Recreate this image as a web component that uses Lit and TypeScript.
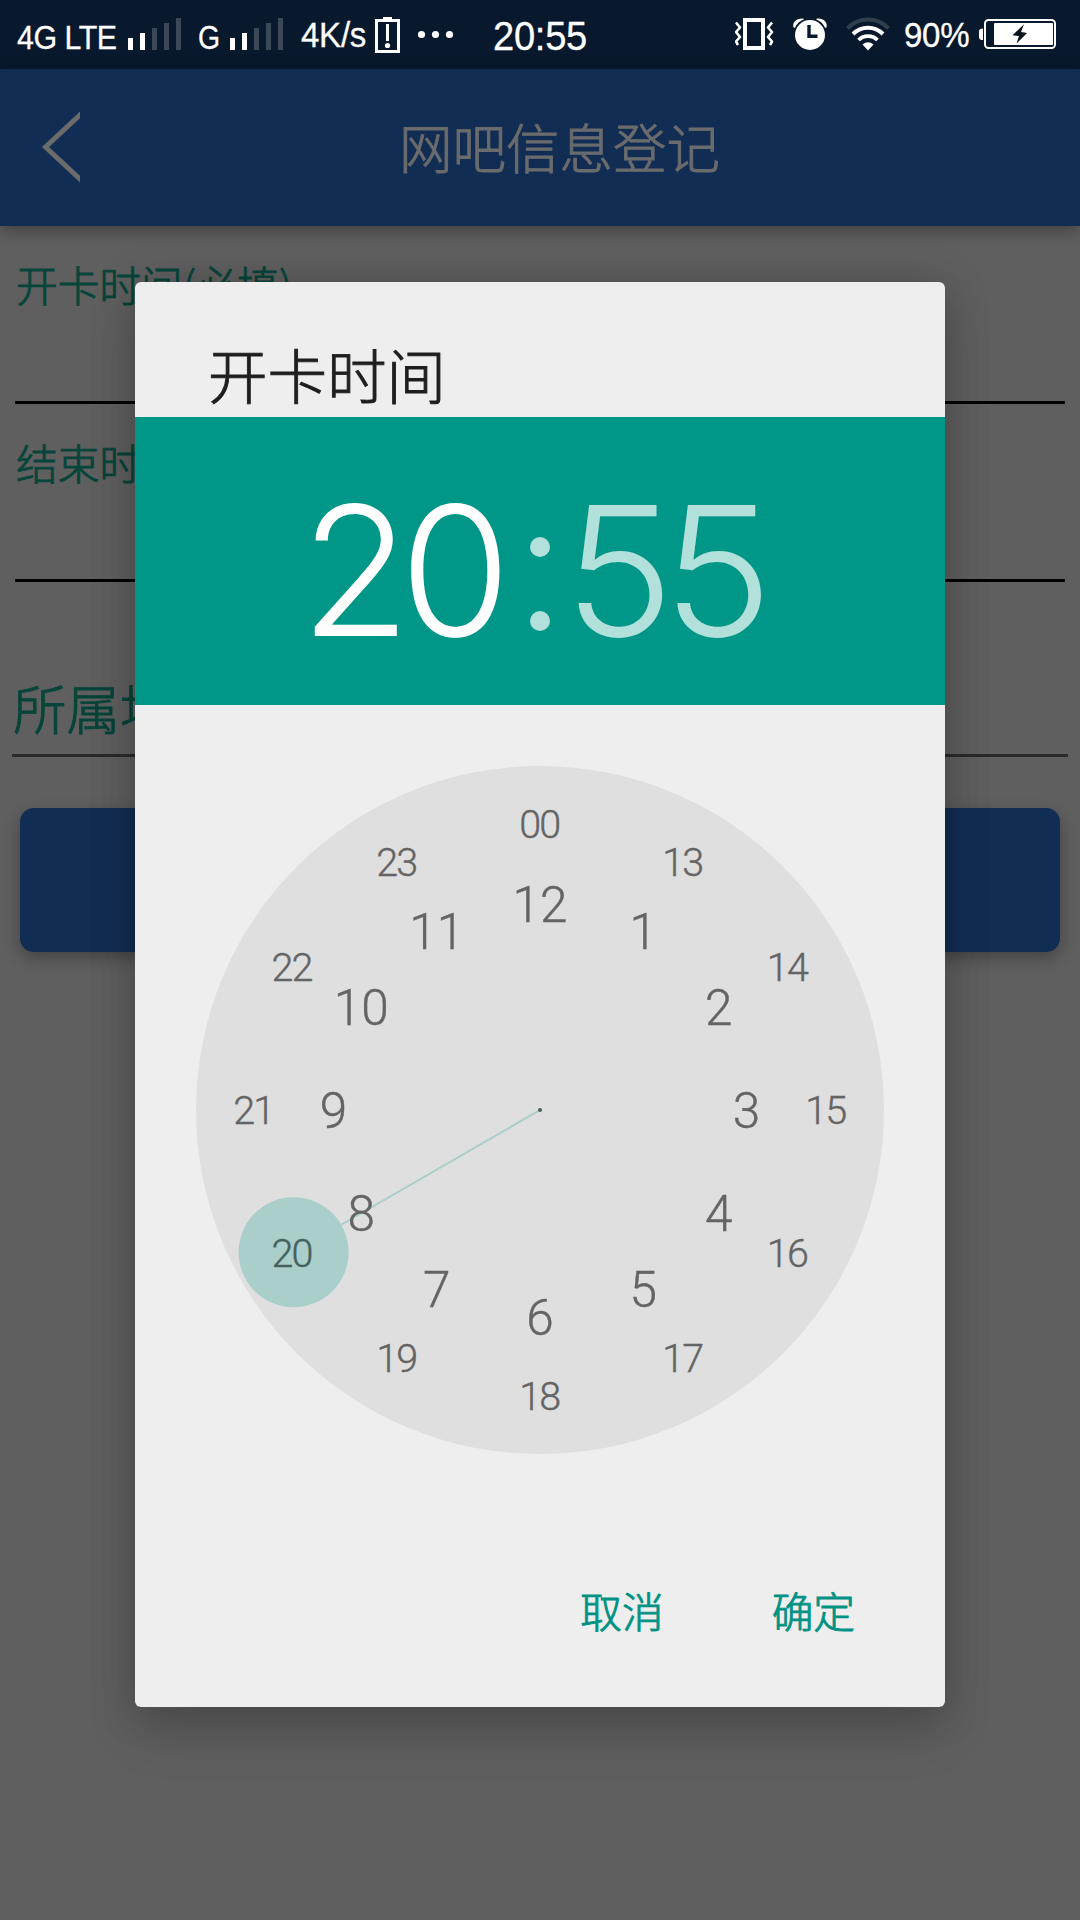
import { LitElement, html, svg, css } from "lit";
import { customElement, property } from "lit/decorators.js";

const CJK = css`"Noto Sans CJK SC", "Noto Sans", sans-serif`;

@customElement("signal-bars")
export class SignalBars extends LitElement {
  @property({ type: Number }) level = 2;
  static styles = css`
    :host { display: block; width: 54px; height: 69px; }
    svg { display: block; }
    .bar { fill: #3b4857; }
    .on { fill: #fff; }
  `;
  render() {
    return html`<svg width="54" height="69" viewBox="0 0 54 69">
      ${[12, 17, 22, 27, 32].map(
        (h, i) => svg`<rect class=${i < this.level ? "on" : "bar"} x=${i * 12} y=${50 - h} width="5" height=${h}></rect>`
      )}
    </svg>`;
  }
}

@customElement("status-bar")
export class StatusBar extends LitElement {
  static styles = css`
    :host {
      display: flex; height: 69px; background: #08192d; color: #fff;
      font-family: "Liberation Sans", sans-serif; white-space: nowrap; -webkit-text-stroke: .3px #fff;
    }
    svg { display: block; flex: none; }
    .net, .cell, .rate, .clock, .pct { flex: none; line-height: 40px; transform-origin: left; }
    .net { width: 111px; margin-left: 17px; padding-top: 18px; font-size: 33px; letter-spacing: -.5px; transform: scaleX(.92); }
    .cell { width: 32px; padding-top: 18px; margin-left: 16px; font-size: 33px; transform: scaleX(.86); }
    .rate { width: 74px; padding-top: 15px; margin-left: 17px; font-size: 35px; letter-spacing: -.3px; transform: scaleX(.945); }
    .clock { width: 100px; padding-top: 16px; margin-left: 36px; font-size: 41px; letter-spacing: -.3px; transform: scaleX(.93); }
    .vib { margin-left: 142px; }
    .pct { width: 75px; padding-top: 15px; margin-left: 13px; font-size: 35px; letter-spacing: -.3px; transform: scaleX(.945); }
  `;
  render() {
    return html`
      <span class="net">4G LTE</span>
      <signal-bars></signal-bars>
      <span class="cell">G</span>
      <signal-bars></signal-bars>
      <span class="rate">4K/s</span>
      <svg width="82" height="69" viewBox="375 0 82 69" fill="#fff">
        <path fill-rule="evenodd" d="M375 19h8v-2h9v2h8v34h-25zM378 22v28h19V22z"></path>
        <rect x="386" y="24" width="3" height="17"></rect>
        <circle cx="387.5" cy="45.5" r="2.6"></circle>
        <circle cx="421.5" cy="34.5" r="3.6"></circle>
        <circle cx="435.5" cy="34.5" r="3.6"></circle>
        <circle cx="449.5" cy="34.5" r="3.6"></circle>
      </svg>
      <span class="clock">20:55</span>
      <svg class="vib" width="156" height="69" viewBox="735 0 156 69" fill="none" stroke="#fff">
        <rect x="745" y="20" width="18" height="28" stroke-width="4"></rect>
        <path stroke-width="2.6" d="M736 22.500l4 5-4 4.500 4 5-4 4.500 2 3.500M772 22.500l-4 5 4 4.500-4 5 4 4.500-2 3.500" stroke-linejoin="round"></path>
        <circle cx="810" cy="35" r="15" fill="#fff" stroke="none"></circle>
        <path d="M809 25v11.200h8.500" stroke="#08192d" stroke-width="3.400"></path>
        <path fill="#fff" stroke="none" d="M793.500 27.500c-1.500-5 3-9.500 9.500-9l1 .8c-4 1.500-7.500 4.500-9 8.500zM826.500 27.500c1.500-5-3-9.500-9.500-9l-1 .8c4 1.500 7.500 4.500 9 8.500z"></path>
        <path d="M847.500 28.500a28 28 0 0 1 41 0" stroke="#303e4d" stroke-width="4"></path>
        <path d="M853 34a21 21 0 0 1 30 0" stroke-width="4"></path>
        <path d="M858.500 40a13.500 13.500 0 0 1 19 0" stroke-width="3.800"></path>
        <path d="M862.500 44.500q5.500-4.500 11 0L868 50.500z" fill="#fff" stroke="none"></path>
      </svg>
      <span class="pct">90%</span>
      <svg width="78" height="69" viewBox="979 0 78 69">
        <path d="M983 28.500c-5 0-4 3-4 5.500s-1 6 4 6z" fill="#fff"></path>
        <rect x="985" y="20" width="70" height="28" rx="3.500" fill="none" stroke="#fff" stroke-width="2"></rect>
        <rect x="994" y="23" width="59" height="22" rx="1" fill="#fff"></rect>
        <path d="M1024 24.300l-11.500 11 6.500.700-2.500 7.500 10.500-10.500-6-1z" fill="#08111b"></path>
      </svg>
    `;
  }
}

@customElement("clock-dial")
export class ClockDial extends LitElement {
  @property({ type: Number }) hour = 20;
  static styles = css`
    :host { display: block; width: 688px; height: 688px; }
    svg { display: block; }
    text { font-family: Roboto, sans-serif; text-anchor: middle; fill: #646464; stroke: #646464; stroke-width: .4px; }
    .outer { font-size: 39.500px; font-weight: 300; letter-spacing: -1.800px; }
    .inner { font-size: 49.500px; font-weight: 300; }
    .sel { fill: #45615d; stroke: #45615d; }
  `;
  private at(i: number, r: number) {
    const a = (i * Math.PI) / 6;
    return [344 + r * Math.sin(a), 344 - r * Math.cos(a)];
  }
  render() {
    const [hx, hy] = this.at(this.hour - 12, 284.500);
    const [lx, ly] = this.at(this.hour - 12, 229);
    return html`<svg width="688" height="688" viewBox="0 0 688 688">
      <circle cx="344" cy="344" r="344" fill="#dfdfdf"></circle>
      <line x1="344" y1="344" x2=${lx} y2=${ly} stroke="#a9cec9" stroke-width="2"></line>
      <circle cx=${hx} cy=${hy} r="55" fill="#aacfca"></circle>
      <circle cx="344" cy="344" r="2" fill="#45615d"></circle>
      ${Array.from({ length: 12 }, (_, i) => {
        const [ox, oy] = this.at(i, 286);
        const [ix, iy] = this.at(i, 206.500);
        const o = i === 0 ? "00" : String(i + 12);
        return svg`
          <text class=${i + 12 === this.hour ? "outer sel" : "outer"} x=${ox - 0.700} y=${oy + 14}>${o}</text>
          <text class="inner" x=${ix} y=${iy + 18}>${i === 0 ? 12 : i}</text>`;
      })}
    </svg>`;
  }
}

@customElement("app-root")
export class AppRoot extends LitElement {
  static styles = css`
    :host {
      display: block; position: relative; width: 1080px; height: 1920px; overflow: hidden;
      background: #5f5f5f; font-family: ${CJK}; font-weight: 300; white-space: nowrap;
      -webkit-text-stroke: .9px currentColor;
    }
    .header {
      display: grid; grid-template-columns: 120px 1fr 120px; align-items: center;
      height: 157px; background: #122d53; color: #6a6b6d;
      box-shadow: 0 4px 16px rgba(0, 0, 0, .35);
    }
    .back { display: block; margin: 0 0 1px 40px; }
    .title { text-align: center; font-size: 53.500px; line-height: 80px; padding: 0 0 3px 39px; }
    .form { display: flex; flex-direction: column; padding: 33px 12px 0; color: #07443a; }
    .field { height: 145px; margin: 0 3px 33px; padding-left: 1px; border-bottom: 3px solid #000; font-size: 41.700px; line-height: 50px; box-sizing: border-box; }
    .area { height: 98px; margin-top: 44px; padding: 8px 0 0 1px; border-bottom: 3px solid #2a2a2a; font-size: 53.500px; line-height: 80px; box-sizing: border-box; }
    .submit {
      height: 144px; margin: 51px 8px 0; border-radius: 14px; background: #122d53;
      box-shadow: 0 6px 16px rgba(0, 0, 0, .3);
    }
    .dialog {
      position: absolute; left: 135px; top: 282px; width: 810px; height: 1425px;
      display: flex; flex-direction: column; border-radius: 6px; background: #eee; overflow: hidden;
    }
    .shadow {
      position: absolute; left: 135px; top: 282px; width: 810px; height: 1425px; border-radius: 6px;
      box-shadow: 0 28px 50px rgba(0, 0, 0, .14), 0 2px 46px rgba(0, 0, 0, .18);
    }
    .heading { height: 135px; padding: 47px 0 0 73px; box-sizing: border-box; font-size: 59.500px; line-height: 88px; color: #1e1e1e; }
    .time {
      height: 288px; display: grid; grid-template-columns: 1fr 40px 1fr; align-items: center;
      background: #009688; color: #b2e0db; font-family: Inter, sans-serif; font-weight: 260;
      font-size: 180px; line-height: 268px; letter-spacing: -11px; -webkit-text-stroke: 0;
    }
    .hh { color: #fff; text-align: right; padding: 20px 20px 0 0; }
    .mm { padding: 20px 0 0 4px; transform: scaleX(1.03); transform-origin: left; }
    .colon { display: flex; flex-direction: column; align-items: center; gap: 54px; padding-top: 46px; }
    .dot { width: 20px; height: 20px; border-radius: 50%; background: #b2e0db; }
    .dial { margin: 61px 0 0 61px; -webkit-text-stroke: 0; }
    .actions { display: flex; justify-content: flex-end; gap: 108px; margin-top: 126px; padding-right: 90px; font-size: 41.700px; line-height: 60px; color: #009284; }
  `;
  render() {
    return html`
      <status-bar></status-bar>
      <div class="header">
        <svg class="back" width="40" height="74" viewBox="40 110 40 74" fill="none" stroke="#6b6b6b" stroke-width="5">
          <path d="M82 113L45.500 147L82 181"></path>
        </svg>
        <div class="title">网吧信息登记</div>
      </div>
      <div class="form">
        <div class="field">开卡时间(必填)</div>
        <div class="field">结束时间</div>
        <div class="area">所属地</div>
        <div class="submit"></div>
      </div>
      <div class="shadow"></div>
      <div class="dialog">
        <div class="heading">开卡时间</div>
        <div class="time">
          <div class="hh">20</div>
          <div class="colon"><div class="dot"></div><div class="dot"></div></div>
          <div class="mm">55</div>
        </div>
        <clock-dial class="dial" hour="20"></clock-dial>
        <div class="actions"><span>取消</span><span>确定</span></div>
      </div>
    `;
  }
}
